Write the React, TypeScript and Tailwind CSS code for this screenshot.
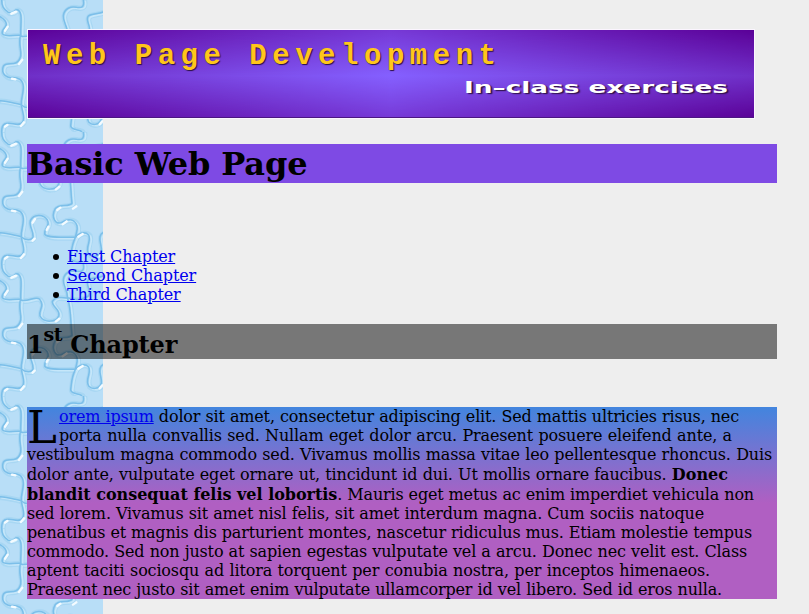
const LINES = [
  // left vertical seam
  'M5 0C5 18 10 26 25 37C45 44 42 25 54 30C68 37 62 65 62 104C54 132 65 150 62 168C52 205 24 183 11 197C3 213 10 228 30 233C55 231 70 238 70 262C70 285 62 295 64 315C67 339 76 350 68 366C56 384 30 362 14 372C4 378 5 387 5 396',
  // left horizontal seams
  'M0 50C9 55 19 61 19 73C18 84 3 89 7 101C15 113 40 104 62 106',
  'M0 302C22 303 40 309 64 314',
  // lower horizontal seam
  'M64 315C75 325 96 327 99 314C101 295 86 283 91 266C100 246 130 245 142 264C152 282 132 288 134 306C143 320 190 315 226 316C237 301 256 298 266 309C275 329 254 345 266 366C279 379 300 373 304 357C306 342 297 329 300 314C302 306 305 304 309 302',
  // upper horizontal seam
  'M62 108C80 116 108 94 119 106C136 127 114 139 120 156C132 177 168 176 176 156C183 136 155 129 157 112C168 93 188 103 206 102C228 109 248 107 265 96C278 82 253 61 265 48C276 40 294 43 309 36',
  // right vertical seam
  'M250 0C254 19 246 25 230 22C212 18 193 25 190 47C188 67 204 79 202 100C214 134 211 177 216 213C207 228 178 213 165 231C151 258 169 279 185 271C204 257 225 262 231 281C235 298 226 306 226 317C214 340 215 355 212 378C216 394 241 386 246 396',
];

function PuzzleBackground() {
  return (
    <svg className="absolute left-0 top-0 h-[614px] w-[103px]" aria-hidden="true">
      <defs>
        <filter id="soften" x="-5%" y="-5%" width="110%" height="110%"><feGaussianBlur stdDeviation="1.8" /></filter>
        <pattern id="puzzle" width="309" height="396" patternUnits="userSpaceOnUse" patternTransform="scale(0.33333)">
          <rect width="309" height="396" fill="#b8def7" />
          <g fill="none" strokeLinecap="round" strokeLinejoin="round" filter="url(#soften)">
            {LINES.map((d) => <path key={d} d={d} stroke="#a3d4f1" strokeWidth="17" transform="translate(3 2)" opacity=".75" />)}
            {LINES.map((d) => <path key={d} d={d} stroke="#c6e7fa" strokeWidth="5" transform="translate(6 4)" />)}
            {LINES.map((d) => <path key={d} d={d} stroke="#7cbfe9" strokeWidth="4.5" />)}
            <path d="M18 76L10 88M62 175L52 188M29 37L43 31M31 232L41 234M67 363L58 374M17 371L10 376M99 316L93 322M93 268L100 257M140 280L135 290M173 160L163 168M167 230L176 223M224 219L214 226M183 273L195 264M245 402L238 411M302 360L294 369M230 310L243 302" stroke="#f4fbff" strokeWidth="7" transform="translate(5 4)" />
          </g>
        </pattern>
      </defs>
      <rect width="103" height="614" fill="url(#puzzle)" />
    </svg>
  );
}

function Banner() {
  return (
    <svg className="block h-[90px] w-[728px]" viewBox="0 0 728 90" role="img" aria-label="Web Page Development">
      <defs>
        <linearGradient id="across">
          <stop offset="0" stopColor="#7030c8" />
          <stop offset=".5" stopColor="#8560ff" />
          <stop offset="1" stopColor="#7030c8" />
        </linearGradient>
        <linearGradient id="acrossDark">
          <stop offset="0" stopColor="#5a0096" />
          <stop offset=".5" stopColor="#7638d5" />
          <stop offset="1" stopColor="#5a0096" />
        </linearGradient>
        <linearGradient id="fade" x1="0" y1="0" x2="0" y2="1">
          <stop offset="0" stopColor="#fff" />
          <stop offset=".52" stopColor="#000" />
          <stop offset="1" stopColor="#fff" />
        </linearGradient>
        <mask id="edges"><rect width="728" height="90" fill="url(#fade)" /></mask>
      </defs>
      <rect width="728" height="90" fill="#fbf5ff" />
      <rect x="1" y="1" width="726" height="88" fill="url(#across)" />
      <rect x="1" y="1" width="726" height="88" fill="url(#acrossDark)" mask="url(#edges)" />
      <path d="M1 88.5H727" stroke="#4b1781" />
      <text
        x="16" y="35" textLength="453"
        className="fill-[#ffc61a] font-['Liberation_Mono',monospace] text-[29px] font-bold [text-shadow:1px_1px_1px_#2c1040]"
      >
        Web Page Development
      </text>
      <text
        x="437" y="64" textLength="264" lengthAdjust="spacingAndGlyphs"
        className="fill-white font-['DejaVu_Sans',sans-serif] text-[15px] font-bold [text-shadow:1px_1px_1px_#2c1040]"
      >
        In–class exercises
      </text>
    </svg>
  );
}

const link = 'text-[#0000ee] underline';
const row = 'block h-[19px] whitespace-nowrap leading-[19px] [text-align-last:justify]';
const item = "flex items-center before:mr-2 before:-ml-3.5 before:mt-px before:size-1.5 before:rounded-full before:bg-black before:content-['']";

export default function App() {
  return (
    <div className="relative h-[614px] overflow-hidden bg-[#eeeeee] font-['DejaVu_Serif',serif] text-base leading-[normal] text-black">
      <PuzzleBackground />
      <main className="relative ml-[27px] flow-root w-[750px] pt-[29px]">
        <Banner />
        <h1 className="mt-[25px] h-[39px] bg-[#7e4ae4] text-[32px] font-bold leading-[41px] tracking-[-0.15px]">Basic Web Page</h1>
        <ul className="mt-16 pl-10 leading-[19px] tracking-[-0.1px]">
          <li className={item}><a className={link} href="#first">First Chapter</a></li>
          <li className={item}><a className={link} href="#second">Second Chapter</a></li>
          <li className={item}><a className={link} href="#third">Third Chapter</a></li>
        </ul>
        <h2 id="first" className="mt-5 h-[35px] bg-black/50 text-2xl font-bold leading-[41px] tracking-[-0.14px]">
          1<sup className="relative -top-[12px] align-baseline text-[19px] leading-none tracking-[-0.5px]">st</sup> Chapter
        </h2>
        <p className="mt-12 h-48 bg-[linear-gradient(#4285de,#b05fc2_50%)] tracking-[-0.16px]">
          <span className="float-left h-[38px] w-8 text-[45px] leading-[41px]">L</span>
          <span className={`${row} w-[712px]`}><a className={link} href="#lorem">orem ipsum</a> dolor sit amet, consectetur adipiscing elit. Sed mattis ultricies risus, nec</span>
          <span className={`${row} w-[705px]`}>porta nulla convallis sed. Nullam eget dolor arcu. Praesent posuere eleifend ante, a</span>
          <span className={`${row} w-[745px]`}>vestibulum magna commodo sed. Vivamus mollis massa vitae leo pellentesque rhoncus. Duis</span>
          <span className={`${row} mt-px w-[701px]`}>dolor ante, vulputate eget ornare ut, tincidunt id dui. Ut mollis ornare faucibus. <strong className="tracking-[0.02px]">Donec</strong></span>
          <span className={`${row} mt-px w-[727px]`}><strong className="tracking-[-0.04px]">blandit consequat felis vel lobortis</strong>. Mauris eget metus ac enim imperdiet vehicula non</span>
          <span className={`${row} w-[677px]`}>sed lorem. Vivamus sit amet nisl felis, sit amet interdum magna. Cum sociis natoque</span>
          <span className={`${row} w-[725px]`}>penatibus et magnis dis parturient montes, nascetur ridiculus mus. Etiam molestie tempus</span>
          <span className={`${row} w-[720px]`}>commodo. Sed non justo at sapien egestas vulputate vel a arcu. Donec nec velit est. Class</span>
          <span className={`${row} w-[683px]`}>aptent taciti sociosqu ad litora torquent per conubia nostra, per inceptos himenaeos.</span>
          <span className={`${row} w-[695px]`}>Praesent nec justo sit amet enim vulputate ullamcorper id vel libero. Sed id eros nulla.</span>
        </p>
      </main>
    </div>
  );
}
